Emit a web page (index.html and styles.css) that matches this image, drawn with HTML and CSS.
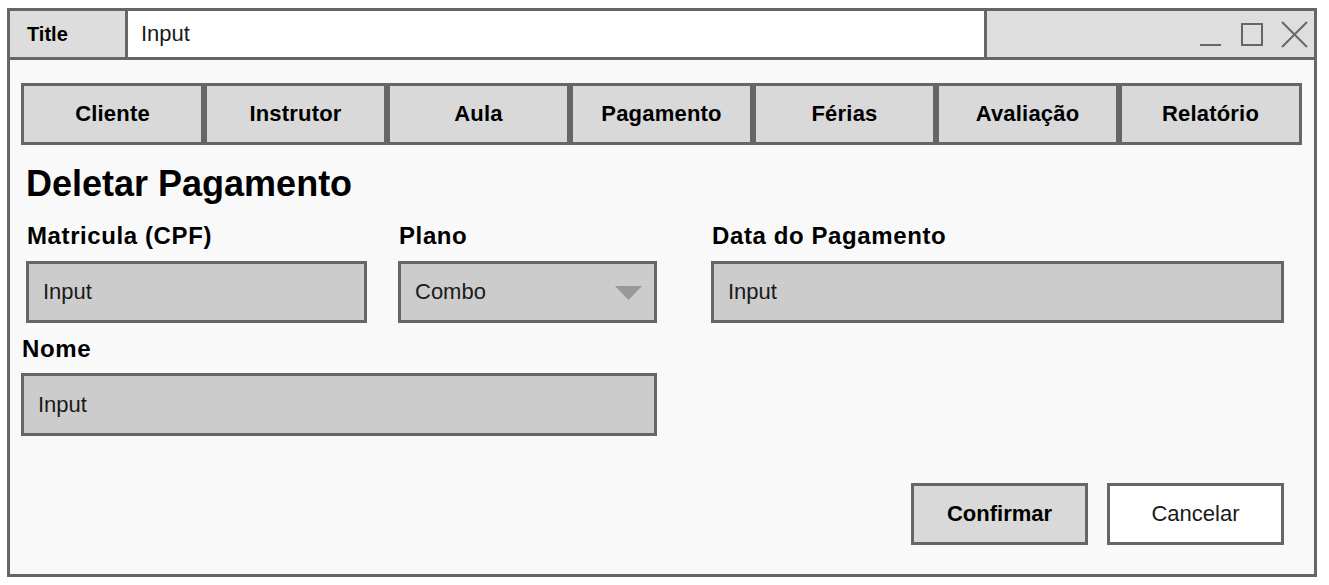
FILE: index.html
```html
<!DOCTYPE html>
<html lang="pt">
<head>
<meta charset="utf-8">
<title>Deletar Pagamento</title>
<link rel="stylesheet" href="styles.css">
</head>
<body>
<div class="window">
  <div class="titlebar">
    <div class="title-cell">Title</div>
    <div class="title-input">Input</div>
    <div class="title-controls">
      <svg class="controls-svg" width="113" height="46" viewBox="0 0 113 46">
        <line x1="3" y1="34" x2="24" y2="34" stroke="#666" stroke-width="2"/>
        <rect x="45" y="13" width="20" height="21" fill="none" stroke="#666" stroke-width="2"/>
        <line x1="85" y1="11" x2="110" y2="36" stroke="#666" stroke-width="2"/>
        <line x1="110" y1="11" x2="85" y2="36" stroke="#666" stroke-width="2"/>
      </svg>
    </div>
  </div>
  <div class="content">
    <div class="tabs">
      <div class="tab">Cliente</div>
      <div class="tab">Instrutor</div>
      <div class="tab">Aula</div>
      <div class="tab">Pagamento</div>
      <div class="tab">Férias</div>
      <div class="tab">Avaliação</div>
      <div class="tab">Relatório</div>
    </div>
    <h1 class="heading">Deletar Pagamento</h1>
    <div class="row row-1">
      <div class="field field-cpf">
        <div class="label">Matricula (CPF)</div>
        <div class="input">Input</div>
      </div>
      <div class="field field-plano">
        <div class="label">Plano</div>
        <div class="input combo">
          <span>Combo</span>
          <svg class="arrow" width="27" height="14" viewBox="0 0 27 14"><polygon points="0,0 27,0 13.5,14" fill="#999"/></svg>
        </div>
      </div>
      <div class="field field-data">
        <div class="label">Data do Pagamento</div>
        <div class="input">Input</div>
      </div>
    </div>
    <div class="row row-2">
      <div class="field field-nome">
        <div class="label">Nome</div>
        <div class="input input-tall">Input</div>
      </div>
    </div>
    <div class="actions">
      <div class="btn btn-primary">Confirmar</div>
      <div class="btn btn-secondary">Cancelar</div>
    </div>
  </div>
</div>
</body>
</html>
```
FILE: styles.css
```css
* { box-sizing: border-box; }
html, body { margin: 0; padding: 0; background: #ffffff; }
body { font-family: "Liberation Sans", Arial, sans-serif; color: #000; }

.window {
  margin: 8px 0 0 7px;
  width: 1310px;
  height: 569px;
  border: 3px solid #666666;
  display: flex;
  flex-direction: column;
  background: #f9f9f9;
}

.titlebar {
  height: 49px;
  flex: none;
  display: flex;
  border-bottom: 3px solid #666666;
}
.title-cell {
  width: 118px;
  border-right: 3px solid #666666;
  background: #dddddd;
  font-weight: bold;
  font-size: 20px;
  padding-left: 17px;
  display: flex;
  align-items: center;
}
.title-input {
  width: 859px;
  border-right: 3px solid #666666;
  background: #ffffff;
  font-size: 22px;
  padding-left: 13px;
  display: flex;
  align-items: center;
  color: #1a1a1a;
}
.title-controls {
  flex: 1;
  background: #dedede;
  display: flex;
  justify-content: flex-end;
}
.controls-svg { display: block; margin-right: 4px; }

.content {
  flex: 1;
  padding: 23px 12px 0 11px;
}

.tabs {
  display: grid;
  grid-template-columns: repeat(7, 183px);
  height: 62px;
}
.tab {
  border: 3px solid #666666;
  background: #d9d9d9;
  display: flex;
  align-items: center;
  justify-content: center;
  font-weight: bold;
  font-size: 22px;
  letter-spacing: 0.2px;
}

.heading {
  margin: 19px 0 0 5px;
  font-size: 36px;
  line-height: 40px;
  font-weight: bold;
  letter-spacing: 0px;
}

.row { display: flex; }
.row-1 { margin-top: 18px; }
.row-2 { margin-top: 12px; }

.label {
  font-weight: bold;
  font-size: 24px;
  line-height: 28px;
  letter-spacing: 0.6px;
}
.field-cpf { margin-left: 5px; width: 341px; }
.field-cpf .label { margin-left: 1px; }
.field-plano { margin-left: 31px; width: 259px; }
.field-plano .label { margin-left: 1px; }
.field-data { margin-left: 54px; width: 573px; }
.field-data .label { margin-left: 1px; }
.field-nome { width: 636px; }
.field-nome .label { margin-left: 1px; }

.input {
  margin-top: 11px;
  height: 62px;
  border: 3px solid #666666;
  background: #cccccc;
  font-size: 22px;
  color: #1a1a1a;
  padding-left: 14px;
  display: flex;
  align-items: center;
}
.input-tall { margin-top: 10px; height: 63px; }
.combo {
  justify-content: space-between;
  padding-right: 12px;
}
.arrow { display: block; margin-top: 2px; }

.actions {
  display: flex;
  justify-content: flex-end;
  gap: 19px;
  margin: 47px 18px 0 0;
}
.btn {
  width: 177px;
  height: 62px;
  border: 3px solid #666666;
  display: flex;
  align-items: center;
  justify-content: center;
  font-size: 22px;
}
.btn-primary { background: #d9d9d9; font-weight: bold; }
.btn-secondary { background: #ffffff; color: #1a1a1a; }
```
